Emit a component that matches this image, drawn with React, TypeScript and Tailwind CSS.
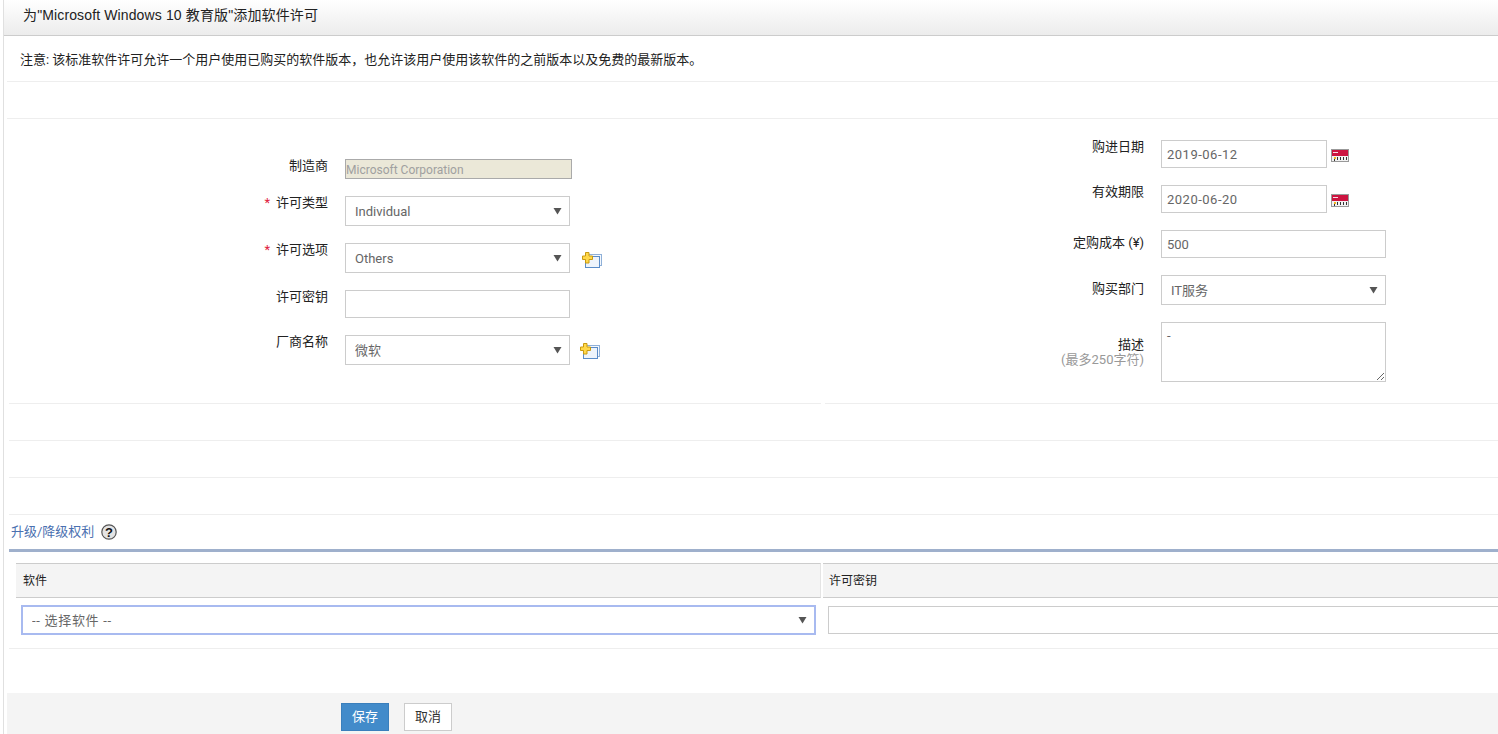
import React from 'react';

const FONT = "font-['Roboto','Noto_Sans_CJK_SC',sans-serif]";

const Arrow = () => (
  <svg className="absolute right-[8px] top-1/2 -translate-y-1/2" width="9" height="8" viewBox="0 0 9 8">
    <path d="M0.5 1h8L4.5 7.5z" fill="#555" />
  </svg>
);

const AddIcon = ({ className = '' }: { className?: string }) => (
  <svg className={className} width="20" height="16" viewBox="0 0 20 16">
    <rect x="6.5" y="2.5" width="13" height="11" fill="#f4f8fd" stroke="#8fb0d8" />
    <rect x="3.5" y="4.5" width="14" height="11" fill="#eef4fb" stroke="#5a8cc8" />
    <path d="M3.5 0.5h3.5v3.5h3.5v3.5H7v3.5H3.5V7.5H0.5V4h3z" fill="#ffd84a" stroke="#c99a10" />
  </svg>
);

const CalendarIcon = () => (
  <svg className="ml-[4px] mt-[9px] shrink-0" width="18" height="13" viewBox="0 0 18 13">
    <rect x="0.5" y="0.5" width="17" height="12" fill="#f2f2f2" stroke="#999" />
    <rect x="1" y="1" width="16" height="6" fill="#cc1440" />
    <rect x="2" y="3" width="5" height="1" fill="#f8dde3" />
    <path d="M6.5 8v3M9.5 8v3M12.5 8v3M15.5 8v3M3.5 10v2" stroke="#333" />
    <rect x="3" y="8" width="2" height="2" fill="#f2b420" />
  </svg>
);

const HelpIcon = () => (
  <svg className="ml-[7px]" width="16" height="16" viewBox="0 0 16 16">
    <circle cx="8" cy="8" r="7.2" fill="#e4e4e4" stroke="#555" strokeWidth="1.2" />
    <text x="8" y="12.5" textAnchor="middle" fontSize="13" fontWeight="700" fontFamily="Liberation Sans" fill="#111">?</text>
  </svg>
);

const Select = ({ value, className, textClass = '' }: { value: string; className: string; textClass?: string }) => (
  <div className={`relative ${className}`}>
    <select
      defaultValue={value}
      className={`${FONT} ${textClass} block h-full w-full appearance-none rounded-none border border-[#ccc] bg-white pl-[9px] pt-[2px] text-[13px] text-[#666] outline-none`}
    >
      <option>{value}</option>
    </select>
    <Arrow />
  </div>
);

const TextInput = ({ value = '', className }: { value?: string; className: string }) => (
  <input
    defaultValue={value}
    className={`${FONT} block rounded-none border border-[#ccc] bg-white pl-[5px] text-[13px] text-[#666] outline-none ${className}`}
  />
);

const Row = ({
  label,
  required,
  labelClass,
  labelWidth,
  children,
}: {
  label: React.ReactNode;
  required?: boolean;
  labelClass: string;
  labelWidth: string;
  children: React.ReactNode;
}) => (
  <div className="flex items-start">
    <div className={`${labelWidth} ${labelClass} shrink-0 pr-[17px] text-right text-[13px] leading-[14px] text-[#222]`}>
      {required && <span className="mr-[6px] text-[#e0203c]">*</span>}
      {label}
    </div>
    {children}
  </div>
);

const Line = ({ className = '' }: { className?: string }) => <div className={`h-[37px] border-b border-[#eee] ${className}`} />;

export default function App() {
  return (
    <div className={`${FONT} h-[734px] w-[1498px] overflow-hidden bg-white`}>
      <div className="ml-[3px] h-full border-l border-[#e0e0e0]">
        <div className="flex h-[36px] items-center border-b border-[#ccc] bg-gradient-to-b from-white to-[#ececec] pb-[4px] pl-[19px] font-['Liberation_Sans','Noto_Sans_CJK_SC',sans-serif] text-[14px] tracking-[0.13px] text-[#222]">
          为"Microsoft Windows 10 教育版"添加软件许可
        </div>

        <div className="pl-[3px]">
          <div className="flex h-[46px] items-center border-b border-[#eee] pl-[13px] pt-[2px] text-[13px] text-[#222]">
            注意: 该标准软件许可允许一个用户使用已购买的软件版本，也允许该用户使用该软件的之前版本以及免费的最新版本。
          </div>
          <Line />

          <div className="ml-[2px]">
            <div className="flex h-[285px]">
              <div className="flex w-[812px] flex-col gap-[17px] border-b border-[#eee] pt-[40px]">
                <Row label="制造商" labelWidth="w-[336px]" labelClass="pt-0">
                  <input
                    disabled
                    defaultValue="Microsoft Corporation"
                    className={`${FONT} h-[20px] w-[227px] rounded-none border border-[#aaa] bg-[#ebe8d8] pt-[2px] text-[12px] text-[#a0a0a0]`}
                  />
                </Row>
                <Row label="许可类型" required labelWidth="w-[336px]" labelClass="pt-0">
                  <Select value="Individual" className="h-[30px] w-[225px]" />
                </Row>
                <Row label="许可选项" required labelWidth="w-[336px]" labelClass="pt-0">
                  <Select value="Others" className="h-[30px] w-[225px]" />
                  <AddIcon className="ml-[12px] mt-[9px]" />
                </Row>
                <Row label="许可密钥" labelWidth="w-[336px]" labelClass="pt-0">
                  <TextInput className="h-[28px] w-[225px]" />
                </Row>
                <Row label="厂商名称" labelWidth="w-[336px]" labelClass="pt-0">
                  <Select value="微软" className="h-[30px] w-[225px]" />
                  <AddIcon className="ml-[10px] mt-[8px]" />
                </Row>
              </div>
              <div className="ml-[4px] flex flex-1 flex-col gap-[17px] border-b border-[#eee] pt-[21px]">
                <Row label="购进日期" labelWidth="w-[336px]" labelClass="">
                  <TextInput value="2019-06-12" className="h-[28px] w-[166px] tracking-[0.5px]" />
                  <CalendarIcon />
                </Row>
                <Row label="有效期限" labelWidth="w-[336px]" labelClass="">
                  <TextInput value="2020-06-20" className="h-[28px] w-[166px] tracking-[0.5px]" />
                  <CalendarIcon />
                </Row>
                <Row label="定购成本 (¥)" labelWidth="w-[336px]" labelClass="pt-[6px]">
                  <TextInput value="500" className="h-[28px] w-[225px]" />
                </Row>
                <Row label="购买部门" labelWidth="w-[336px]" labelClass="pt-[7px]">
                  <Select value="IT服务" className="h-[30px] w-[225px]" />
                </Row>
                <Row
                  label={
                    <>
                      描述
                      <br />
                      <span className="text-[#999]">(最多250字符)</span>
                    </>
                  }
                  labelWidth="w-[336px]"
                  labelClass="pt-[15px] leading-[15px]"
                >
                  <textarea
                    defaultValue="-"
                    className={`${FONT} h-[60px] w-[225px] rounded-none border border-[#ccc] px-[5px] py-[3px] text-[13px] text-[#666] outline-none`}
                  />
                </Row>
              </div>
            </div>

            <Line />
            <Line />
            <Line />

            <div className="flex h-[37px] items-center border-b-[3px] border-[#9fb0cc] pl-[2px] text-[13px] text-[#4a70b0]">
              升级/降级权利
              <HelpIcon />
            </div>

            <div className="flex gap-[2px] pl-[7px] pt-[11px] text-[12px] text-[#222]">
              <div className="flex h-[35px] w-[805px] items-center border-y border-r border-[#ccc] border-r-[#e4e4e4] bg-[#f4f4f4] pl-[7px]">软件</div>
              <div className="flex h-[35px] flex-1 items-center border-y border-[#ccc] bg-[#f4f4f4] pl-[6px]">许可密钥</div>
            </div>

            <div className="flex h-[51px] items-start border-b border-[#eee] pl-[13px] pt-[8px]">
              <Select
                value="-- 选择软件 --"
                textClass="tracking-[0.7px]"
                className="h-[28px] w-[793px] shrink-0 outline outline-1 outline-[#a8baf0] [&>select]:border-[#a8baf0]"
              />
              <TextInput className="ml-[13px] h-[28px] w-[700px] shrink-0" />
            </div>
          </div>

          <div className="mt-[44px] flex h-[41px] items-start gap-[15px] bg-[#f4f4f4] pl-[334px] pt-[10px]">
            <button className="h-[28px] w-[48px] border border-[#3a7fbc] bg-[#428bca] text-[13px] text-white">保存</button>
            <button className="h-[28px] w-[48px] border border-[#ccc] bg-white text-[13px] text-[#333]">取消</button>
          </div>
        </div>
      </div>
    </div>
  );
}
